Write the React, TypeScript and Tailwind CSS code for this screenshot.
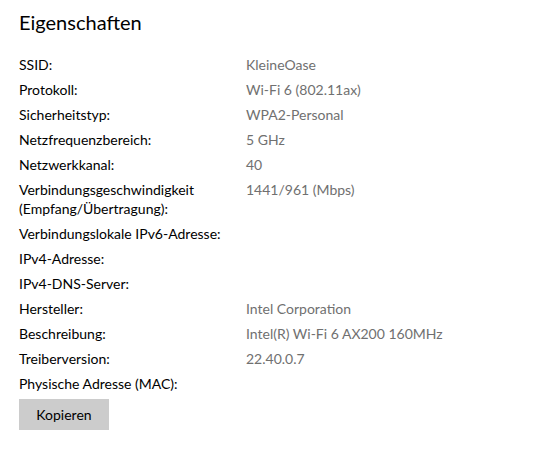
type Property = {
  label: string[];
  value?: string;
};

const properties: Property[] = [
  { label: ["SSID:"], value: "KleineOase" },
  { label: ["Protokoll:"], value: "Wi-Fi 6 (802.11ax)" },
  { label: ["Sicherheitstyp:"], value: "WPA2-Personal" },
  { label: ["Netzfrequenzbereich:"], value: "5 GHz" },
  { label: ["Netzwerkkanal:"], value: "40" },
  { label: ["Verbindungsgeschwindigkeit", "(Empfang/Übertragung):"], value: "1441/961 (Mbps)" },
  { label: ["Verbindungslokale IPv6-Adresse:"] },
  { label: ["IPv4-Adresse:"] },
  { label: ["IPv4-DNS-Server:"] },
  { label: ["Hersteller:"], value: "Intel Corporation" },
  { label: ["Beschreibung:"], value: "Intel(R) Wi-Fi 6 AX200 160MHz" },
  { label: ["Treiberversion:"], value: "22.40.0.7" },
  { label: ["Physische Adresse (MAC):"] },
];

export default function App() {
  return (
    <div className="min-h-[461px] bg-white pl-[19px] pt-[8px] font-['Lato',sans-serif] text-black">
      <h1 className="text-[20px] leading-[28px] font-normal">Eigenschaften</h1>

      <dl className="mt-[19px] flex flex-col gap-[6px] text-[14px] leading-[19px]">
        {properties.map((property) => (
          <div className="grid grid-cols-[227px_1fr]" key={property.label.join(" ")}>
            <dt>
              {property.label.map((line) => (
                <div key={line}>{line}</div>
              ))}
            </dt>
            <dd className="text-[#707070]">{property.value ?? ""}</dd>
          </div>
        ))}
      </dl>

      <button
        className="mt-[6px] h-[31px] w-[90px] bg-[#cccccc] text-[14px] text-black"
        type="button"
      >
        Kopieren
      </button>
    </div>
  );
}
